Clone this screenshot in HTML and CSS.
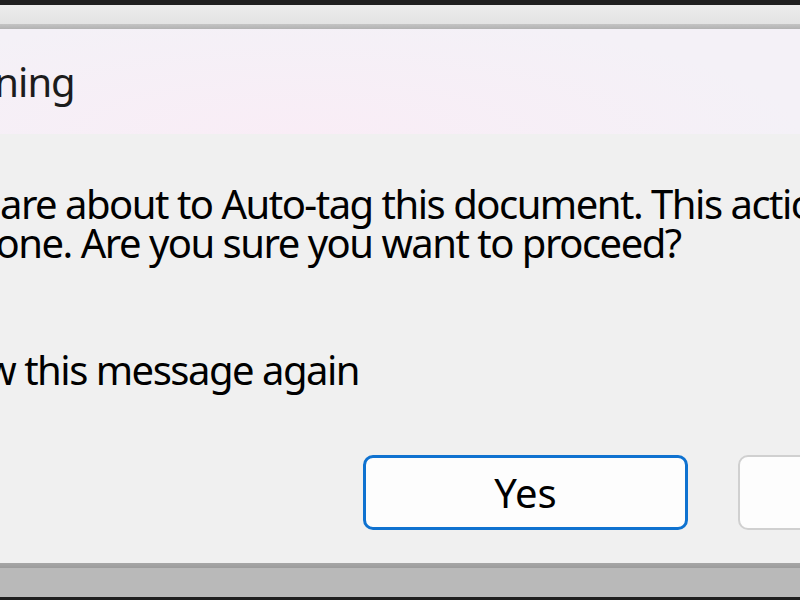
FILE: index.html
```html
<!DOCTYPE html>
<html>
<head>
  <title>Warning</title>
  <link rel="stylesheet" href="styles.css">
</head>
<body>
  <div class="screen-strip"></div>
  <div class="window-behind"></div>
  <div class="window-edge"></div>

  <div class="dialog">
    <div class="titlebar">
      <span class="title">Warning</span>
    </div>

    <div class="dialog-body">
      <div class="message">
        <svg class="warn-icon" viewBox="0 0 96 96" width="76" height="76">
          <path d="M48 6 L92 88 H4 Z" fill="#f7c325" stroke="#c98f00" stroke-width="3" stroke-linejoin="round"/>
          <rect x="44" y="34" width="8" height="30" rx="3" fill="#222"/>
          <circle cx="48" cy="74" r="5" fill="#222"/>
        </svg>
        <p class="message-text">You are about to Auto-tag this document. This action cannot be<br>undone. Are you sure you want to proceed?</p>
      </div>

      <label class="dont-show">
        <span class="checkbox"></span>
        <span>Don't show this message again</span>
      </label>

      <div class="buttons">
        <button class="btn btn-default">Yes</button>
        <button class="btn">No</button>
      </div>
    </div>
  </div>

  <div class="window-edge bottom-edge"></div>
  <div class="window-behind bottom-behind"></div>
  <div class="screen-strip bottom-strip"></div>
</body>
</html>
```

FILE: styles.css
```css
html, body {
  margin: 0;
  padding: 0;
}

body {
  width: 800px;
  height: 600px;
  overflow: hidden;
  background: #f0f0f0;
  font-family: 'Noto Sans', 'Open Sans', sans-serif;
  color: #000;
}

/* strips of the window / screen behind the dialog */
.screen-strip {
  height: 5px;
  background: #1f1f1f;
}

.window-behind {
  height: 19px;
  background: linear-gradient(#ececec, #e3e3e3);
}

.window-edge {
  height: 5px;
  background: linear-gradient(#c4c4c4, #b2b2b2);
}

.bottom-edge {
  background: linear-gradient(#a6a6a6, #9c9c9c);
}

.bottom-behind {
  height: 29px;
  background: #b9b9b9;
}

.bottom-strip {
  height: 3px;
}

/* the dialog itself, its left part is off screen */
.dialog {
  margin-left: -260px;
  width: 1400px;
}

.titlebar {
  height: 105px;
  box-sizing: border-box;
  padding: 33px 0 0 182px;
  background: radial-gradient(ellipse 500px 120px at 560px 105px, #f9edf6 0%, #f4f1f7 100%);
}

.title {
  font-size: 40px;
  line-height: 40px;
  letter-spacing: -1px;
  color: #1c1c1c;
}

.dialog-body {
  height: 429px;
  box-sizing: border-box;
  padding-top: 50px;
  background: #f0f0f0;
}

.message {
  display: flex;
  align-items: flex-start;
  gap: 70px;
  padding-left: 40px;
}

.warn-icon {
  flex-shrink: 0;
}

.message-text {
  margin: 0;
  font-size: 40px;
  line-height: 39px;
  letter-spacing: -1.5px;
  white-space: nowrap;
}

.dont-show {
  display: flex;
  align-items: center;
  gap: 14px;
  margin-top: 86px;
  padding-left: 23px;
  font-size: 40px;
  line-height: 39px;
  letter-spacing: -1.5px;
  white-space: nowrap;
}

.checkbox {
  width: 43px;
  height: 43px;
  box-sizing: border-box;
  border: 2px solid #333;
  border-radius: 6px;
  background: #fff;
}

.buttons {
  display: flex;
  gap: 50px;
  margin-top: 64px;
  padding-left: 623px;
}

.btn {
  width: 325px;
  height: 75px;
  box-sizing: border-box;
  border: 2px solid #d0d0d0;
  border-radius: 10px;
  background: #fdfdfd;
  font-family: 'Noto Sans', 'Open Sans', sans-serif;
  font-size: 40px;
  color: #000;
  padding: 0;
}

.btn-default {
  border: 3px solid #0f72d0;
}
```
